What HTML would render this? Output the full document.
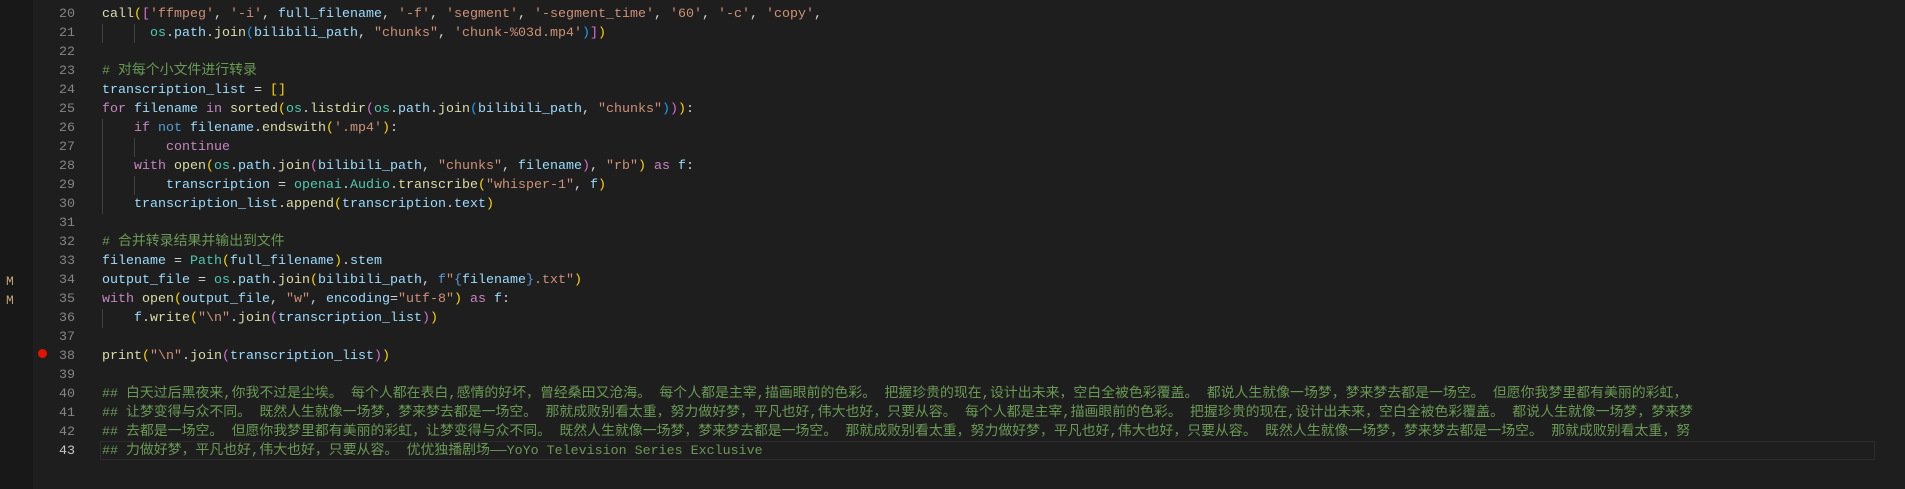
<!DOCTYPE html>
<html><head><meta charset="utf-8"><style>
html,body{margin:0;padding:0;background:#1e1e1e;width:1905px;height:489px;overflow:hidden}
body{position:relative;font-family:"Liberation Mono","Noto Sans CJK SC",monospace;font-size:13.33px}
.strip{position:absolute;left:0;top:0;width:33px;height:489px;background:#181818}
.ln{position:absolute;left:33px;width:42px;text-align:right;color:#858585;height:19px;line-height:19px}
.code{position:absolute;left:102px;white-space:pre;height:19px;line-height:19px;color:#d4d4d4}
.g{position:absolute;width:1px;background:#404040;height:19px}
.m{position:absolute;left:6px;color:#c4a57a;line-height:19px;font-size:13px}
.bp{position:absolute;left:38px;width:9px;height:9px;border-radius:50%;background:#e51400}
.cur{position:absolute;left:100px;top:441px;width:1773px;height:17px;border:1px solid #2c2c2c}
.f{color:#dcdcaa}.s{color:#ce9178}.v{color:#9cdcfe}.k{color:#c586c0}.b{color:#569cd6}.c{color:#6a9955}.t{color:#4ec9b0}
.y{color:#ffd700}.p{color:#da70d6}.bl{color:#179fff}.w{color:#d4d4d4}
.cc{font-size:13.9px;display:inline-block;line-height:19px;height:19px;vertical-align:top;overflow:visible}
</style></head><body>
<div class="strip"></div>
<div class="cur"></div>
<div class="m" style="top:272px">M</div>
<div class="m" style="top:291px">M</div>
<div class="bp" style="top:349px"></div>

<div class="ln" style="top:5px">20</div><div class="code" style="top:5px"><span class="f">call</span><span class="y">(</span><span class="p">[</span><span class="s">'ffmpeg'</span>, <span class="s">'-i'</span>, <span class="v">full_filename</span>, <span class="s">'-f'</span>, <span class="s">'segment'</span>, <span class="s">'-segment_time'</span>, <span class="s">'60'</span>, <span class="s">'-c'</span>, <span class="s">'copy'</span>,</div>
<div class="ln" style="top:24px">21</div><div class="g" style="left:102px;top:24px"></div><div class="g" style="left:134px;top:24px"></div><div class="code" style="top:24px">      <span class="t">os</span>.<span class="v">path</span>.<span class="f">join</span><span class="bl">(</span><span class="v">bilibili_path</span>, <span class="s">"chunks"</span>, <span class="s">'chunk-%03d.mp4'</span><span class="bl">)</span><span class="p">]</span><span class="y">)</span></div>
<div class="ln" style="top:43px">22</div>
<div class="ln" style="top:62px">23</div><div class="code c" style="top:62px"># <span class="cc">对每个小文件进行转录</span></div>
<div class="ln" style="top:81px">24</div><div class="code" style="top:81px"><span class="v">transcription_list</span> = <span class="y">[]</span></div>
<div class="ln" style="top:100px">25</div><div class="code" style="top:100px"><span class="k">for</span> <span class="v">filename</span> <span class="k">in</span> <span class="f">sorted</span><span class="y">(</span><span class="t">os</span>.<span class="f">listdir</span><span class="p">(</span><span class="t">os</span>.<span class="v">path</span>.<span class="f">join</span><span class="bl">(</span><span class="v">bilibili_path</span>, <span class="s">"chunks"</span><span class="bl">)</span><span class="p">)</span><span class="y">)</span>:</div>
<div class="ln" style="top:119px">26</div><div class="g" style="left:102px;top:119px"></div><div class="code" style="top:119px">    <span class="k">if</span> <span class="b">not</span> <span class="v">filename</span>.<span class="f">endswith</span><span class="y">(</span><span class="s">'.mp4'</span><span class="y">)</span>:</div>
<div class="ln" style="top:138px">27</div><div class="g" style="left:102px;top:138px"></div><div class="g" style="left:134px;top:138px"></div><div class="code" style="top:138px">        <span class="k">continue</span></div>
<div class="ln" style="top:157px">28</div><div class="g" style="left:102px;top:157px"></div><div class="code" style="top:157px">    <span class="k">with</span> <span class="f">open</span><span class="y">(</span><span class="t">os</span>.<span class="v">path</span>.<span class="f">join</span><span class="p">(</span><span class="v">bilibili_path</span>, <span class="s">"chunks"</span>, <span class="v">filename</span><span class="p">)</span>, <span class="s">"rb"</span><span class="y">)</span> <span class="k">as</span> <span class="v">f</span>:</div>
<div class="ln" style="top:176px">29</div><div class="g" style="left:102px;top:176px"></div><div class="g" style="left:134px;top:176px"></div><div class="code" style="top:176px">        <span class="v">transcription</span> = <span class="t">openai</span>.<span class="t">Audio</span>.<span class="f">transcribe</span><span class="y">(</span><span class="s">"whisper-1"</span>, <span class="v">f</span><span class="y">)</span></div>
<div class="ln" style="top:195px">30</div><div class="g" style="left:102px;top:195px"></div><div class="code" style="top:195px">    <span class="v">transcription_list</span>.<span class="f">append</span><span class="y">(</span><span class="v">transcription</span>.<span class="v">text</span><span class="y">)</span></div>
<div class="ln" style="top:214px">31</div>
<div class="ln" style="top:233px">32</div><div class="code c" style="top:233px"># <span class="cc">合并转录结果并输出到文件</span></div>
<div class="ln" style="top:252px">33</div><div class="code" style="top:252px"><span class="v">filename</span> = <span class="t">Path</span><span class="y">(</span><span class="v">full_filename</span><span class="y">)</span>.<span class="v">stem</span></div>
<div class="ln" style="top:271px">34</div><div class="code" style="top:271px"><span class="v">output_file</span> = <span class="t">os</span>.<span class="v">path</span>.<span class="f">join</span><span class="y">(</span><span class="v">bilibili_path</span>, <span class="b">f</span><span class="s">"</span><span class="b">{</span><span class="v">filename</span><span class="b">}</span><span class="s">.txt"</span><span class="y">)</span></div>
<div class="ln" style="top:290px">35</div><div class="code" style="top:290px"><span class="k">with</span> <span class="f">open</span><span class="y">(</span><span class="v">output_file</span>, <span class="s">"w"</span>, <span class="v">encoding</span>=<span class="s">"utf-8"</span><span class="y">)</span> <span class="k">as</span> <span class="v">f</span>:</div>
<div class="ln" style="top:309px">36</div><div class="g" style="left:102px;top:309px"></div><div class="code" style="top:309px">    <span class="v">f</span>.<span class="f">write</span><span class="y">(</span><span class="s">"\n"</span>.<span class="f">join</span><span class="p">(</span><span class="v">transcription_list</span><span class="p">)</span><span class="y">)</span></div>
<div class="ln" style="top:328px">37</div>
<div class="ln" style="top:347px">38</div><div class="code" style="top:347px"><span class="f">print</span><span class="y">(</span><span class="s">"\n"</span>.<span class="f">join</span><span class="p">(</span><span class="v">transcription_list</span><span class="p">)</span><span class="y">)</span></div>
<div class="ln" style="top:366px">39</div>
<div class="ln" style="top:385px">40</div><div class="code c" style="top:385px">## <span class="cc">白天过后黑夜来,你我不过是尘埃。 每个人都在表白,感情的好坏，曾经桑田又沧海。 每个人都是主宰,描画眼前的色彩。 把握珍贵的现在,设计出未来，空白全被色彩覆盖。 都说人生就像一场梦，梦来梦去都是一场空。 但愿你我梦里都有美丽的彩虹，</span></div>
<div class="ln" style="top:404px">41</div><div class="code c" style="top:404px">## <span class="cc">让梦变得与众不同。 既然人生就像一场梦，梦来梦去都是一场空。 那就成败别看太重，努力做好梦，平凡也好,伟大也好，只要从容。 每个人都是主宰,描画眼前的色彩。 把握珍贵的现在,设计出未来，空白全被色彩覆盖。 都说人生就像一场梦，梦来梦</span></div>
<div class="ln" style="top:423px">42</div><div class="code c" style="top:423px">## <span class="cc">去都是一场空。 但愿你我梦里都有美丽的彩虹，让梦变得与众不同。 既然人生就像一场梦，梦来梦去都是一场空。 那就成败别看太重，努力做好梦，平凡也好,伟大也好，只要从容。 既然人生就像一场梦，梦来梦去都是一场空。 那就成败别看太重，努</span></div>
<div class="ln" style="top:442px;color:#c6c6c6">43</div><div class="code c" style="top:442px">## <span class="cc">力做好梦，平凡也好,伟大也好，只要从容。 优优独播剧场——</span>YoYo Television Series Exclusive</div>
</body></html>
